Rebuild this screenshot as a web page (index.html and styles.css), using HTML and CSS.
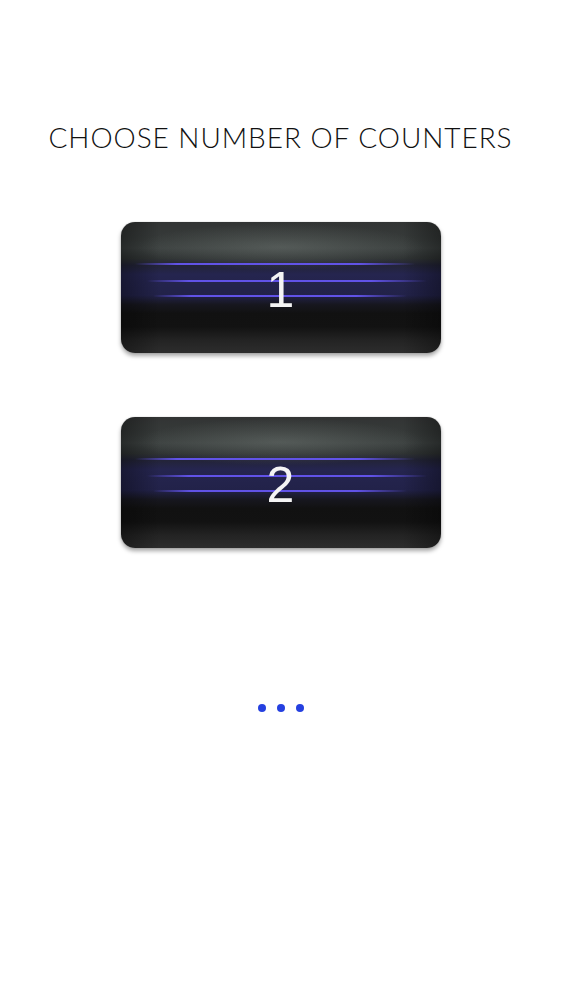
FILE: index.html
```html
<!DOCTYPE html>
<html>
<head>
<meta charset="utf-8">
<link rel="stylesheet" href="styles.css">
</head>
<body>
<main class="screen">
  <h1 class="title">CHOOSE NUMBER OF COUNTERS</h1>
  <div class="choices">
    <button class="counter-btn">
      <span class="line line-a"></span>
      <span class="line line-b"></span>
      <span class="line line-c"></span>
      <span class="label">1</span>
    </button>
    <button class="counter-btn">
      <span class="line line-a"></span>
      <span class="line line-b"></span>
      <span class="line line-c"></span>
      <span class="label">2</span>
    </button>
  </div>
  <div class="dots">
    <span class="dot"></span><span class="dot"></span><span class="dot"></span>
  </div>
</main>
</body>
</html>
```
FILE: styles.css
```css
html, body {
  margin: 0;
  padding: 0;
  background: #ffffff;
}
.screen {
  width: 561px;
  height: 1000px;
  display: flex;
  flex-direction: column;
  align-items: center;
}
.title {
  margin: 0;
  padding-top: 121px;
  font-family: "Lato", "Liberation Sans", sans-serif;
  font-weight: 300;
  font-size: 28px;
  line-height: 32px;
  color: #111111;
  letter-spacing: 0.95px;
  white-space: nowrap;
}
.choices {
  margin-top: 69px;
  display: flex;
  flex-direction: column;
  gap: 64px;
}
.counter-btn {
  position: relative;
  width: 320px;
  height: 131px;
  border: none;
  padding: 0;
  border-radius: 14px;
  overflow: hidden;
  box-shadow: 0 3px 4px rgba(0,0,0,0.35), 0 0 1px rgba(0,0,0,0.4);
  background:
    linear-gradient(90deg, rgba(0,0,0,0.35) 0%, rgba(0,0,0,0) 12%, rgba(0,0,0,0) 88%, rgba(0,0,0,0.35) 100%),
    radial-gradient(ellipse 45% 18% at 50% 19%, rgba(120,128,124,0.4), rgba(120,128,124,0) 100%),
    linear-gradient(180deg,
      #323434 0%,
      #363a39 12%,
      #3c4140 20%,
      #2f3333 28%,
      #232438 33%,
      #25254f 40%,
      #222249 56%,
      #17171f 63%,
      #111111 70%,
      #121212 80%,
      #232323 90%,
      #2d2d2d 100%);
  cursor: pointer;
}
.line {
  position: absolute;
  height: 2px;
  background: linear-gradient(90deg, rgba(90,70,230,0) 0%, rgba(100,85,240,0.95) 15%, rgba(100,85,240,0.95) 80%, rgba(90,70,230,0) 100%);
}
.line-a { top: 41px; left: 14px; right: 26px; }
.line-b { top: 58px; left: 26px; right: 14px; }
.line-c { top: 73px; left: 32px; right: 34px; }
.label {
  position: relative;
  display: block;
  font-family: "Liberation Sans", Arial, sans-serif;
  font-size: 50px;
  line-height: 50px;
  color: #f4f4f4;
  margin-top: 4px;
}
.dots {
  margin-top: 156px;
  display: flex;
  gap: 11px;
}
.dot {
  width: 8px;
  height: 8px;
  border-radius: 50%;
  background: #2540e0;
}
```
